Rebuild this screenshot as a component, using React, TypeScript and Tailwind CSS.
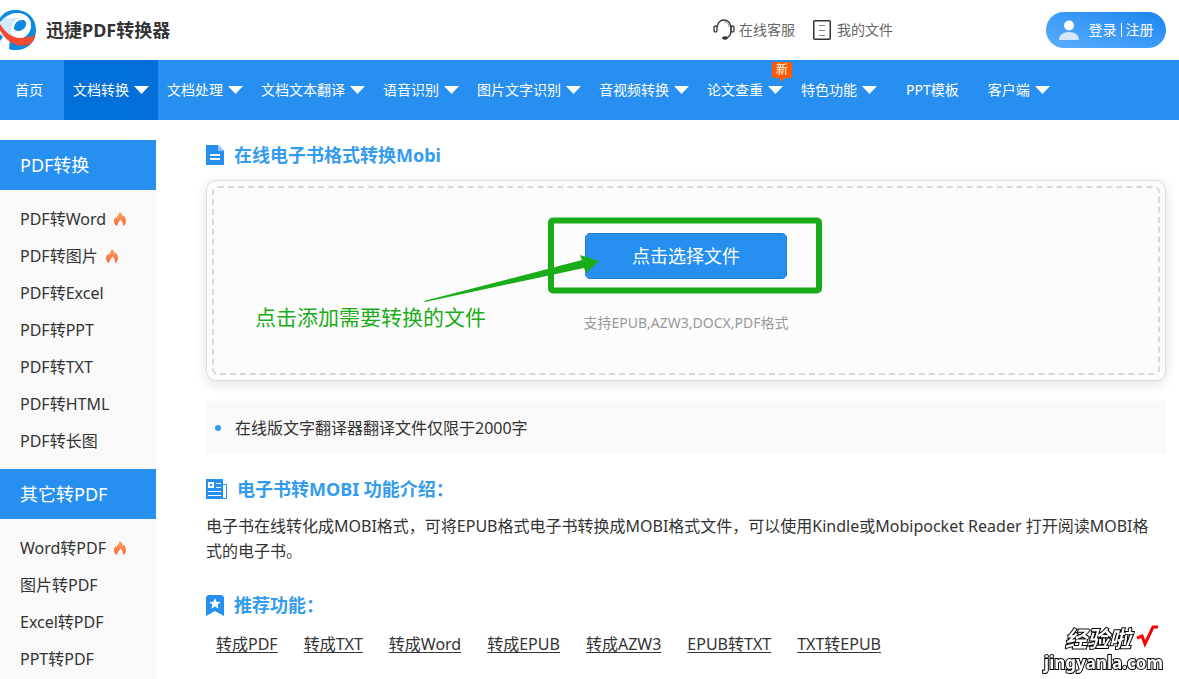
import type { ReactNode } from "react";

type NavItem = {
  label: string;
  menu?: boolean;
  active?: boolean;
  isNew?: boolean;
};

type SideLink = {
  label: string;
  hot?: boolean;
};

const navItems: NavItem[] = [
  { label: "文档转换", menu: true, active: true },
  { label: "文档处理", menu: true },
  { label: "文档文本翻译", menu: true },
  { label: "语音识别", menu: true },
  { label: "图片文字识别", menu: true },
  { label: "音视频转换", menu: true },
  { label: "论文查重", menu: true, isNew: true },
  { label: "特色功能", menu: true },
  { label: "PPT模板" },
  { label: "客户端", menu: true },
];

const fromPdf: SideLink[] = [
  { label: "PDF转Word", hot: true },
  { label: "PDF转图片", hot: true },
  { label: "PDF转Excel" },
  { label: "PDF转PPT" },
  { label: "PDF转TXT" },
  { label: "PDF转HTML" },
  { label: "PDF转长图" },
];

const toPdf: SideLink[] = [
  { label: "Word转PDF", hot: true },
  { label: "图片转PDF" },
  { label: "Excel转PDF" },
  { label: "PPT转PDF" },
];

const related = [
  "转成PDF",
  "转成TXT",
  "转成Word",
  "转成EPUB",
  "转成AZW3",
  "EPUB转TXT",
  "TXT转EPUB",
];

const Logo = () => (
  <svg width="36" height="40" viewBox="0 0 36 40" aria-hidden="true">
    <path d="M0 8C4 2 9 0 16 0c12 0 20 9 20 20 0 12-8 20-20 20-3 0-5 0-7-1l1-9L0 20z" fill="#0c8ae2" />
    <path d="M0 12C5 6 11 3 17 3c8 0 14 5 14 12 0 8-6 14-14 14C10 28 4 22 0 16z" fill="#d3eafa" />
    <path
      d="M6 8c3-3 7-5 11-5 8 0 14 5 14 12 0 7-5 13-12 14-4 0-8-3-8-8 0-7 4-12 9-13-6-1-11 1-14 0z"
      fill="#fff"
    />
    <path d="M14 19c0-6 4-9 8-9 3 0 5 2 4 5-1 4-5 6-8 6-2 0-3-1-4-2z" fill="#0c8ae2" />
    <path
      d="M0 14c5 8 11 13 19 14 6 0 11-1 16-3 0 4-2 7-5 9-6 3-14 2-20-2-5-3-8-8-10-12z"
      fill="#f24a33"
    />
    <path d="M0 22c2 3 5 6 9 9l-1 8H0z" fill="#fff" />
    <path d="M0 24l3 3-3 4z" fill="#0c8ae2" />
  </svg>
);

const HeadsetIcon = () => (
  <svg width="22" height="22" viewBox="0 0 22 22" fill="none" stroke="#333" aria-hidden="true">
    <path d="M4 8C5 3 8 1 11 1s6 2 7 7v4c0 3-2 6-5 7" strokeWidth="1.3" />
    <path d="M11 3c3 0 5 2 5 5" stroke="#999" />
    <rect x="1" y="7" width="3" height="6" rx="1.5" strokeWidth="1.3" />
    <rect x="18" y="7" width="3" height="6" rx="1.5" strokeWidth="1.3" />
    <ellipse cx="12" cy="19" rx="2.5" ry="1.2" fill="#333" />
  </svg>
);

const FileListIcon = () => (
  <svg width="18" height="20" viewBox="0 0 18 20" fill="none" aria-hidden="true">
    <rect x=".75" y=".75" width="16.5" height="18.5" rx="1" stroke="#333" strokeWidth="1.5" />
    <path d="M6 5.5h6M6 10.5h6M6 15.5h6" stroke="#888" />
  </svg>
);

const UserIcon = () => (
  <svg width="20" height="20" viewBox="0 0 20 20" aria-hidden="true">
    <circle cx="10" cy="5.5" r="5" fill="#fff" />
    <path d="M0 20c0-5 4-8 10-8s10 3 10 8z" fill="#d3e8fd" />
  </svg>
);

const FlameIcon = () => (
  <svg width="12" height="14" viewBox="0 0 12 14" aria-hidden="true">
    <defs>
      <linearGradient id="flame" x1="0" y1="0" x2="0" y2="1">
        <stop offset="0" stopColor="#fba65c" />
        <stop offset="1" stopColor="#fb6238" />
      </linearGradient>
    </defs>
    <path
      d="M5.5 0C8 1.2 8.5 3 8.5 4.5c.6-.3.8-.8.9-1.3C11 4.8 12 7 12 9c0 2.500-1.300 4.200-3.200 5 .5-2.300 0-4.100-2.300-6.500C5 9.800 3 11.600 3.300 14 1.200 13.100 0 11.400 0 9.200 0 7.300.8 6 1.600 4.900c.2.700.5 1.100 1 1.300C2.900 3.800 5.600 2.600 5.500 0z"
      fill="url(#flame)"
    />
  </svg>
);

const DocIcon = () => (
  <svg width="18" height="20" viewBox="0 0 18 20" aria-hidden="true">
    <path d="M0 0h12l6 6v14H0z" fill="#278ff0" />
    <path d="M12 0l6 6h-6z" fill="#8fc5f8" />
    <path d="M4 10h10M4 14h10" stroke="#fff" strokeWidth="2" />
  </svg>
);

const NewsIcon = () => (
  <svg width="21" height="20" viewBox="0 0 21 20" aria-hidden="true">
    <path d="M0 0h17v20H0z" fill="#278ff0" />
    <path d="M17 5.5h3.500v14H17" fill="none" stroke="#278ff0" />
    <path d="M2 3h6v6H2z" fill="#fff" />
    <path d="M4 5h2v2H4z" fill="#278ff0" />
    <path d="M10 4.500h5M10 8.500h5M2 12.500h13M2 16.500h13" stroke="#fff" />
  </svg>
);

const BookmarkIcon = () => (
  <svg width="18" height="21" viewBox="0 0 18 21" aria-hidden="true">
    <path d="M2 0h14l2 2v19l-9-5-9 5V2z" fill="#278ff0" />
    <path
      d="M9 3l1.600 3.700 4 .3-3 2.700.9 4L9 11.600l-3.500 2.100.9-4-3-2.700 4-.3z"
      fill="#fff"
    />
  </svg>
);

const SectionTitle = ({ icon, children }: { icon: ReactNode; children: ReactNode }) => (
  <h2 className="flex h-[30px] items-center gap-[10px] text-lg font-bold text-[#349cee]">
    {icon}
    {children}
  </h2>
);

const SideGroup = ({ title, links }: { title: string; links: SideLink[] }) => (
  <section>
    <h2 className="flex h-[50px] items-center bg-[#278ff0] pl-5 text-lg text-white">{title}</h2>
    <ul className="pt-[10px]">
      {links.map(({ label, hot }) => (
        <li key={label}>
          <a href="#" className="flex h-[37px] items-center gap-2 pl-5 text-base">
            {label}
            {hot && <FlameIcon />}
          </a>
        </li>
      ))}
    </ul>
  </section>
);

const Header = () => (
  <header className="flex h-[60px] items-center pr-[13px]">
    <a href="#" className="flex items-center gap-[10px] text-lg font-bold">
      <Logo />
      迅捷PDF转换器
    </a>
    <div className="ml-auto flex items-center gap-[18px] text-sm text-[#666]">
      <a href="#" className="flex items-center gap-1">
        <HeadsetIcon />
        在线客服
      </a>
      <a href="#" className="flex items-center gap-[6px]">
        <FileListIcon />
        我的文件
      </a>
    </div>
    <button
      type="button"
      className="ml-[153px] flex h-9 w-[120px] items-center justify-center rounded-full bg-linear-to-tr from-[#5aaeff] to-[#1585ee] text-sm text-white"
    >
      <UserIcon />
      <span className="ml-[10px]">登录</span>
      <span className="mx-1 h-[14px] w-px bg-white" />
      <span>注册</span>
    </button>
  </header>
);

const Nav = () => (
  <nav className="flex h-[60px] bg-[#278ff0] text-sm whitespace-nowrap text-white">
    <a href="#" className="flex items-center pr-[21px] pl-[15px]">
      首页
    </a>
    {navItems.map(({ label, menu, active, isNew }) => (
      <a
        key={label}
        href="#"
        className={`relative flex items-center ${menu ? "gap-[5px] px-[9px]" : "px-5"} ${
          active ? "bg-[#036fd8]" : ""
        }`}
      >
        {label}
        {menu && (
          <svg width="15" height="8" viewBox="0 0 15 8" aria-hidden="true">
            <path d="M0 0h15L7.5 8z" fill="#fff" />
          </svg>
        )}
        {isNew && (
          <span className="absolute top-[2px] right-0 flex h-4 w-5 items-center justify-center rounded-xs bg-[#ff5a00] text-xs">
            新
            <svg className="absolute top-4 left-2" width="5" height="4" viewBox="0 0 5 4" aria-hidden="true">
              <path d="M0 0h5L0 4z" fill="#ff5a00" />
            </svg>
          </span>
        )}
      </a>
    ))}
  </nav>
);

const DropZone = () => (
  <div className="rounded-[10px] border border-[#ddd] bg-[#fcfcfc] p-[5px] shadow-[0_3px_12px_rgba(0,0,0,0.12)]">
    <div className="relative flex h-[189px] flex-col items-center rounded-md border-2 border-dashed border-[#d9d9d9] pt-[45px]">
      <button
        type="button"
        className="h-[46px] w-[202px] rounded-[5px] border border-[#1c7fdc] bg-[#278ff0] text-lg text-white"
      >
        点击选择文件
      </button>
      <p className="mt-8 text-sm leading-6 text-[#999]">支持EPUB,AZW3,DOCX,PDF格式</p>
      {/* hand-drawn hint over the upload button */}
      <div className="pointer-events-none absolute top-0 left-1/2 h-full w-0 text-[#1aad19]">
        <svg
          className="absolute top-[29px] -left-[262px]"
          width="400"
          height="86"
          viewBox="0 0 400 86"
          aria-hidden="true"
        >
          <rect x="127" y="3.5" width="268" height="70" rx="2" fill="none" stroke="currentColor" strokeWidth="6" />
          <path d="M0 84L158 43 156 38 175 44 162 56 160 51 1 85z" fill="currentColor" />
        </svg>
        <p className="absolute top-[113px] -left-[431px] text-[21px] leading-8 whitespace-nowrap">
          点击添加需要转换的文件
        </p>
      </div>
    </div>
  </div>
);

const Watermark = () => (
  <div className="pointer-events-none fixed right-4 bottom-1 flex flex-col items-end font-bold text-white [-webkit-text-stroke:2px_#000] [paint-order:stroke_fill]">
    <div className="flex items-center gap-1 pr-1">
      <span className="text-[22px] leading-6 italic">经验啦</span>
      <svg width="24" height="26" viewBox="0 0 24 26" aria-hidden="true">
        <path d="M2 13l5-2 3 8L18 2h5" fill="none" stroke="#f00" strokeWidth="3" />
      </svg>
    </div>
    <span className="text-[17px] leading-6">jingyanla.com</span>
  </div>
);

export default function App() {
  return (
    <div className="flex min-h-screen flex-col bg-white font-['Noto_Sans','Noto_Sans_CJK_SC',sans-serif] text-[#333]">
      <Header />
      <Nav />
      <div className="mt-5 flex flex-1 gap-[50px]">
        <aside className="flex w-[156px] shrink-0 flex-col gap-[10px] bg-[#f9f9f9]">
          <SideGroup title="PDF转换" links={fromPdf} />
          <SideGroup title="其它转PDF" links={toPdf} />
        </aside>
        <main className="min-w-0 flex-1 pr-[13px]">
          <SectionTitle icon={<DocIcon />}>在线电子书格式转换Mobi</SectionTitle>
          <div className="mt-[10px]">
            <DropZone />
          </div>
          <ul className="mt-5 bg-[#f9f9f9] pl-[9px]">
            <li className="flex h-[53px] items-center gap-[14px] text-base">
              <span className="size-[6px] rounded-full bg-[#349cee]" />
              在线版文字翻译器翻译文件仅限于2000字
            </li>
          </ul>
          <div className="mt-5">
            <SectionTitle icon={<NewsIcon />}>电子书转MOBI 功能介绍：</SectionTitle>
            <p className="mt-[10px] pr-2 text-base leading-[25px]">
              电子书在线转化成MOBI格式，可将EPUB格式电子书转换成MOBI格式文件，可以使用Kindle或Mobipocket Reader
              打开阅读MOBI格式的电子书。
            </p>
          </div>
          <div className="mt-[26px]">
            <SectionTitle icon={<BookmarkIcon />}>推荐功能：</SectionTitle>
            <div className="mt-3 flex gap-[26px] pl-[10px] text-base whitespace-nowrap">
              {related.map((label) => (
                <a key={label} href="#" className="underline underline-offset-2">
                  {label}
                </a>
              ))}
            </div>
          </div>
        </main>
      </div>
      <Watermark />
    </div>
  );
}
